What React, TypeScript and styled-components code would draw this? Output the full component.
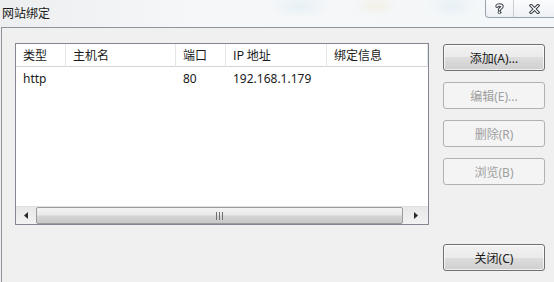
import * as React from 'react';
import styled, { createGlobalStyle } from 'styled-components';

const GlobalStyle = createGlobalStyle`
  html, body {
    margin: 0;
    padding: 0;
    background: #f0f0f0;
  }
  body {
    font-family: "Noto Sans", "Noto Sans CJK SC", sans-serif;
    font-size: 12px;
    color: #000000;
  }
`;

const StyledWindow = styled.div`
  width: 554px;
  height: 282px;
  display: flex;
  flex-direction: column;
  overflow: hidden;
`;

const StyledTitleBar = styled.div`
  height: 27px;
  flex-shrink: 0;
  display: flex;
  align-items: flex-start;
  background:
    radial-gradient(ellipse 30px 12px at 300px 6px, rgba(170, 210, 235, 0.18), transparent),
    radial-gradient(ellipse 22px 10px at 376px 6px, rgba(235, 215, 150, 0.18), transparent),
    radial-gradient(ellipse 26px 12px at 452px 6px, rgba(170, 210, 235, 0.18), transparent),
    linear-gradient(90deg, #eceeef 0%, #f5f7f8 35%, #f4f7f9 100%);
`;

const StyledTitle = styled.div`
  padding: 5px 0 0 2px;
  font-family: "Noto Sans CJK SC", sans-serif;
  font-size: 12px;
  line-height: 16px;
  color: #1a1a1a;
`;

const StyledCaptionGroup = styled.div`
  margin-left: auto;
  display: flex;
  height: 17px;
  border: 1px solid #9aa4ae;
  border-top: none;
  border-right: none;
  border-bottom-left-radius: 4px;
  background: linear-gradient(#fbfcfd, #eef1f4);
`;

interface ICaptionProps {
  width: number;
  divider?: boolean;
}

const StyledCaptionButton = styled.div`
  width: ${(props: ICaptionProps) => props.width}px;
  display: flex;
  align-items: center;
  justify-content: center;
  border-right: ${(props: ICaptionProps) => (props.divider ? '1px solid #c8ced4' : 'none')};
`;

const StyledClient = styled.div`
  flex: 1;
  display: flex;
  padding: 15px 9px 11px 13px;
  margin-left: 1px;
  border-top: 1px solid #8e9499;
  border-left: 1px solid #8e9499;
  background: #f0f0f0;
`;

const StyledListBox = styled.div`
  width: 412px;
  height: 180px;
  border: 1px solid #828790;
  background: #ffffff;
  display: flex;
  flex-direction: column;
`;

const StyledGrid = styled.div`
  display: grid;
  grid-template-columns: 50px 110px 50px 101px 1fr;
`;

const StyledHeaderCell = styled.div`
  height: 22px;
  line-height: 22px;
  padding-left: 7px;
  border-right: 1px solid #e3e6ea;
  border-bottom: 1px solid #d5d5d5;
  font-family: "Noto Sans CJK SC", sans-serif;
  color: #1a1a1a;
  white-space: nowrap;
  &:last-child {
    border-right: none;
  }
`;

const StyledCell = styled.div`
  height: 24px;
  line-height: 24px;
  padding-left: 7px;
  color: #1a1a1a;
  white-space: nowrap;
`;

const StyledFiller = styled.div`
  flex: 1;
`;

const StyledScrollBar = styled.div`
  height: 17px;
  display: flex;
  background: linear-gradient(#e8e8e8, #f2f2f2);
  border-top: 1px solid #e0e0e0;
`;

interface IArrowProps {
  width: number;
}

const StyledArrow = styled.div`
  width: ${(props: IArrowProps) => props.width}px;
  display: flex;
  align-items: center;
  justify-content: center;
`;

const StyledThumb = styled.div`
  flex: 1;
  margin: 0 0 0 1px;
  border: 1px solid #9c9c9c;
  border-radius: 2px;
  background: linear-gradient(#f4f4f4 0%, #e8e8e8 45%, #d4d4d4 55%, #c9c9c9 100%);
  display: flex;
  align-items: center;
  justify-content: center;
`;

const StyledSideColumn = styled.div`
  margin-left: 14px;
  display: flex;
  flex-direction: column;
  gap: 11px;
  padding-top: 1px;
`;

interface IButtonProps {
  disabled?: boolean;
  pushDown?: boolean;
}

const StyledButton = styled.div`
  width: 102px;
  height: 27px;
  box-sizing: border-box;
  border-radius: 3px;
  display: flex;
  align-items: center;
  justify-content: center;
  margin-top: ${(props: IButtonProps) => (props.pushDown ? 'auto' : '0')};
  font-family: "Noto Sans", "Noto Sans CJK SC", sans-serif;
  font-size: 12px;
  color: ${(props: IButtonProps) => (props.disabled ? '#a0a0a0' : '#1a1a1a')};
  border: 1px solid ${(props: IButtonProps) => (props.disabled ? '#adb2b5' : '#707070')};
  background: ${(props: IButtonProps) =>
    props.disabled
      ? '#f4f4f4'
      : 'linear-gradient(#f2f2f2 0%, #ebebeb 50%, #dddddd 50%, #cfcfcf 100%)'};
  box-shadow: ${(props: IButtonProps) => (props.disabled ? 'none' : 'inset 0 0 0 1px rgba(255,255,255,0.7)')};
`;

const HelpGlyph: React.FC = () => (
  <svg width="9" height="11" viewBox="0 0 9 11">
    <g fill="none" strokeLinecap="round" strokeLinejoin="round">
      <path d="M2 3.2 C2 1.5 7 1.5 7 3.4 C7 5 4.5 5 4.5 7" stroke="#3b4148" strokeWidth="3.4" />
      <path d="M2 3.2 C2 1.5 7 1.5 7 3.4 C7 5 4.5 5 4.5 7" stroke="#ffffff" strokeWidth="1.4" />
      <circle cx="4.5" cy="9.4" r="1.4" fill="#ffffff" stroke="#3b4148" strokeWidth="1" />
    </g>
  </svg>
);

const CloseGlyph: React.FC = () => (
  <svg width="11" height="10" viewBox="0 0 11 10">
    <g strokeLinecap="square">
      <path d="M2 1.5 L9 8.5 M9 1.5 L2 8.5" stroke="#3b4148" strokeWidth="3.2" />
      <path d="M2 1.5 L9 8.5 M9 1.5 L2 8.5" stroke="#ffffff" strokeWidth="1.2" />
    </g>
  </svg>
);

const LeftArrow: React.FC = () => (
  <svg width="4" height="7" viewBox="0 0 4 7">
    <path d="M4 0 L0 3.5 L4 7 Z" fill="#2a2a2a" />
  </svg>
);

const RightArrow: React.FC = () => (
  <svg width="4" height="7" viewBox="0 0 4 7">
    <path d="M0 0 L4 3.5 L0 7 Z" fill="#2a2a2a" />
  </svg>
);

const Grip: React.FC = () => (
  <svg width="7" height="8" viewBox="0 0 7 8">
    <path d="M0.5 0 V8 M3.5 0 V8 M6.5 0 V8" stroke="#6e6e6e" strokeWidth="1" />
  </svg>
);

const columns = ['类型', '主机名', '端口', 'IP 地址', '绑定信息'];

const bindings = [{ type: 'http', host: '', port: '80', ip: '192.168.1.179', info: '' }];

const App: React.FC = () => (
  <>
    <GlobalStyle />
    <StyledWindow>
      <StyledTitleBar>
        <StyledTitle>网站绑定</StyledTitle>
        <StyledCaptionGroup>
          <StyledCaptionButton width={27} divider>
            <HelpGlyph />
          </StyledCaptionButton>
          <StyledCaptionButton width={40}>
            <CloseGlyph />
          </StyledCaptionButton>
        </StyledCaptionGroup>
      </StyledTitleBar>
      <StyledClient>
        <StyledListBox>
          <StyledGrid>
            {columns.map((c) => (
              <StyledHeaderCell key={c}>{c}</StyledHeaderCell>
            ))}
            {bindings.map((b) => (
              <React.Fragment key={b.ip}>
                <StyledCell>{b.type}</StyledCell>
                <StyledCell>{b.host}</StyledCell>
                <StyledCell>{b.port}</StyledCell>
                <StyledCell>{b.ip}</StyledCell>
                <StyledCell>{b.info}</StyledCell>
              </React.Fragment>
            ))}
          </StyledGrid>
          <StyledFiller />
          <StyledScrollBar>
            <StyledArrow width={19}>
              <LeftArrow />
            </StyledArrow>
            <StyledThumb>
              <Grip />
            </StyledThumb>
            <StyledArrow width={25}>
              <RightArrow />
            </StyledArrow>
          </StyledScrollBar>
        </StyledListBox>
        <StyledSideColumn>
          <StyledButton>添加(A)...</StyledButton>
          <StyledButton disabled>编辑(E)...</StyledButton>
          <StyledButton disabled>删除(R)</StyledButton>
          <StyledButton disabled>浏览(B)</StyledButton>
          <StyledButton pushDown>关闭(C)</StyledButton>
        </StyledSideColumn>
      </StyledClient>
    </StyledWindow>
  </>
);

export default App;
